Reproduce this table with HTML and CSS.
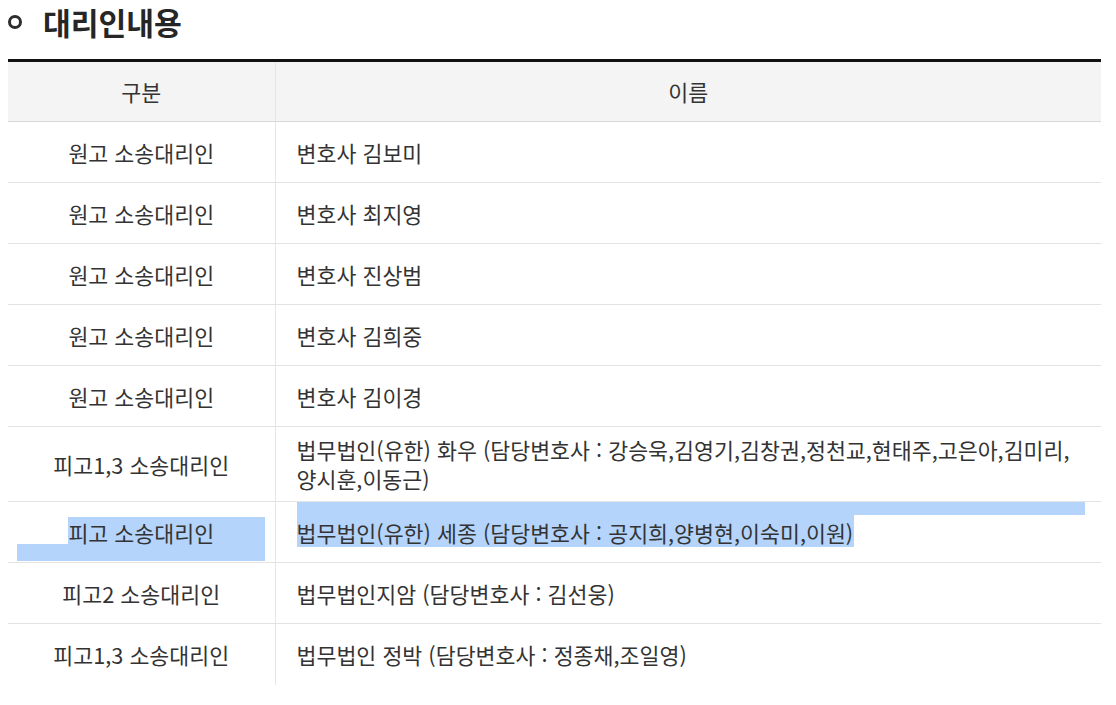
FILE: index.html
```html
<!DOCTYPE html>
<html lang="ko">
<head>
<meta charset="utf-8">
<title>대리인내용</title>
<link rel="stylesheet" href="styles.css">
</head>
<body>
<section class="section">
  <h2 class="section-title"><span class="bullet"></span>대리인내용</h2>
  <table class="agent-table">
    <colgroup>
      <col class="col-type">
      <col class="col-name">
    </colgroup>
    <thead>
      <tr><th>구분</th><th>이름</th></tr>
    </thead>
    <tbody>
      <tr><td class="type">원고 소송대리인</td><td class="name">변호사 김보미</td></tr>
      <tr><td class="type">원고 소송대리인</td><td class="name">변호사 최지영</td></tr>
      <tr><td class="type">원고 소송대리인</td><td class="name">변호사 진상범</td></tr>
      <tr><td class="type">원고 소송대리인</td><td class="name">변호사 김희중</td></tr>
      <tr><td class="type">원고 소송대리인</td><td class="name">변호사 김이경</td></tr>
      <tr class="tall"><td class="type">피고1,3 소송대리인</td><td class="name">법무법인(유한) 화우 (담당변호사 : 강승욱,김영기,김창권,정천교,현태주,고은아,김미리,<br>양시훈,이동근)</td></tr>
      <tr class="selected"><td class="type">피고 소송대리인</td><td class="name">법무법인(유한) 세종 (담당변호사 : 공지희,양병현,이숙미,이원)</td></tr>
      <tr><td class="type">피고2 소송대리인</td><td class="name">법무법인지암 (담당변호사 : 김선웅)</td></tr>
      <tr class="last"><td class="type">피고1,3 소송대리인</td><td class="name">법무법인 정박 (담당변호사 : 정종채,조일영)</td></tr>
    </tbody>
  </table>
</section>
</body>
</html>
```

FILE: styles.css
```css
html, body {
  margin: 0;
  padding: 0;
  background: #ffffff;
}

body {
  font-family: "Noto Sans CJK KR", "Noto Sans", sans-serif;
  color: #333333;
}

.section {
  padding: 0 15px 0 8px;
}

.section-title {
  display: flex;
  align-items: center;
  gap: 21px;
  margin: 0 0 15px 0;
  height: 44px;
  font-size: 30.2px;
  font-weight: 700;
  line-height: 44px;
  color: #262626;
}

.bullet {
  display: block;
  flex: none;
  width: 14px;
  height: 14px;
  box-sizing: border-box;
  border: 3.5px solid #2e2e2e;
  border-radius: 50%;
  margin-left: 0;
}

.agent-table {
  width: 1093px;
  table-layout: fixed;
  border-collapse: collapse;
  border-top: 3px solid #111111;
  font-size: 21.7px;
  line-height: 29px;
}

.col-type { width: 267px; }

.agent-table th,
.agent-table td {
  box-sizing: border-box;
  height: 61px;
  padding: 8px 21px;
  border-bottom: 1px solid #e3e3e3;
  vertical-align: middle;
  font-weight: 400;
  color: #333333;
}

.agent-table th {
  background: #f4f4f4;
  text-align: center;
  border-bottom-color: #d8d8d8;
}

.agent-table th:first-child,
.agent-table td.type {
  border-right: 1px solid #e6e6e6;
}

.agent-table td.type {
  text-align: center;
  padding: 8px 6px;
}

.agent-table td.name {
  text-align: left;
  padding-right: 8px;
}

.agent-table tr.tall td {
  height: 75px;
}

.agent-table tr.last td {
  border-bottom: none;
}

/* text selection highlight drawn over the row */
.agent-table tr.selected td {
  position: relative;
  z-index: 0;
}

.agent-table tr.selected td::before,
.agent-table tr.selected td::after {
  content: "";
  position: absolute;
  z-index: -1;
  background: #b4d4fc;
}

.agent-table tr.selected td.type::before {
  left: 60px;
  top: 15px;
  width: 197px;
  height: 27px;
}

.agent-table tr.selected td.type::after {
  left: 9px;
  top: 42px;
  width: 248px;
  height: 17px;
}

.agent-table tr.selected td.name::before {
  left: 21px;
  top: 0;
  width: 788px;
  height: 13px;
}

.agent-table tr.selected td.name::after {
  left: 21px;
  top: 13px;
  width: 557px;
  height: 32px;
}
```
